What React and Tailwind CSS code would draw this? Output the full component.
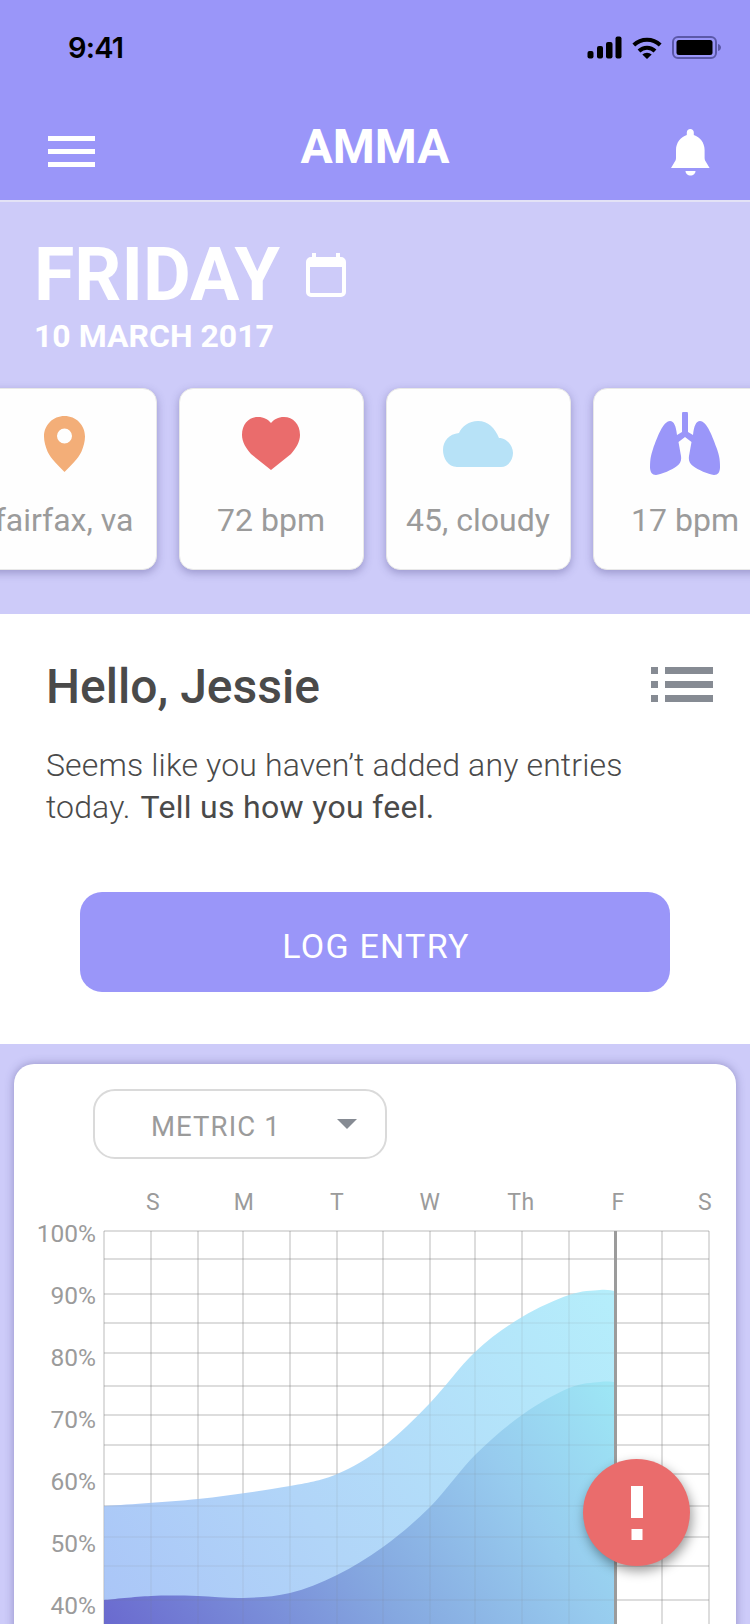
import React from 'react';

const upperPoints = [
  [104, 1506], [198, 1499], [290, 1486], [337, 1474], [383, 1447], [430, 1403], [475, 1352],
  [522, 1317], [569, 1295], [600, 1290], [615, 1291],
];

const lowerPoints = [
  [104, 1600], [151, 1596], [198, 1596], [243, 1598], [290, 1593], [337, 1575], [383, 1547],
  [430, 1507], [475, 1455], [522, 1415], [569, 1388], [600, 1382], [615, 1382],
];

const gridX = [104, 151, 198, 243, 290, 337, 383, 430, 475, 522, 569, 662, 709];
const gridY = [1231, 1259, 1294, 1323, 1353, 1386, 1415, 1445, 1474, 1506, 1537, 1566, 1600];
const yLabels = ['100%', '90%', '80%', '70%', '60%', '50%', '40%'];
const days = ['S', 'M', 'T', 'W', 'Th', 'F', 'S'];

// smooth line through the points, closed along the bottom of the chart
const areaPath = (pts) => {
  let d = `M${pts[0][0]} ${pts[0][1]}`;
  for (let i = 0; i < pts.length - 1; i++) {
    const p0 = pts[i - 1] || pts[i];
    const p1 = pts[i];
    const p2 = pts[i + 1];
    const p3 = pts[i + 2] || p2;
    const c1x = p1[0] + (p2[0] - p0[0]) / 6;
    const c1y = p1[1] + (p2[1] - p0[1]) / 6;
    const c2x = p2[0] - (p3[0] - p1[0]) / 6;
    const c2y = p2[1] - (p3[1] - p1[1]) / 6;
    d += `C${c1x} ${c1y} ${c2x} ${c2y} ${p2[0]} ${p2[1]}`;
  }
  return `${d}L615 1624L104 1624Z`;
};

const StatusIcons = () => (
  <div className="flex items-center">
    <svg width="35" height="23" viewBox="0 0 35 23" fill="#000">
      <rect x="0.5" y="15" width="6" height="7.5" rx="2" />
      <rect x="10" y="10" width="6" height="12.5" rx="2" />
      <rect x="19" y="6" width="6.5" height="16.5" rx="2" />
      <rect x="28.5" y="0.5" width="6" height="22" rx="2" />
    </svg>
    <svg className="ml-[10px]" width="30" height="23" viewBox="0 0 30 23" fill="none" stroke="#000">
      <path d="M1.8 9A19 19 0 0 1 28.2 9" strokeWidth="4" />
      <path d="M7 15A11.5 11.5 0 0 1 23 15" strokeWidth="4" />
      <path d="M10.3 18.6A6.6 6.6 0 0 1 19.7 18.6L15 23Z" fill="#000" stroke="none" />
    </svg>
    <svg className="ml-[10px]" width="49" height="23" viewBox="0 0 49 23" fill="none">
      <rect x="1" y="1" width="43" height="21" rx="5" stroke="#5b58a8" strokeWidth="2" />
      <rect x="4.5" y="4" width="36" height="15" rx="2.5" fill="#000" />
      <path d="M46 8c2 .5 3 2 3 3.5s-1 3-3 3.5z" fill="#5b58a8" />
    </svg>
  </div>
);

const Bell = () => (
  <svg width="39" height="47" viewBox="0 0 39 47" fill="#fff">
    <path d="M19.3 0c-2 0-3.5 1.5-3.5 3.5v2.6C9.5 8 5 14 5 21v8c0 2-1 3.5-2 5L0 39h38.6l-3-5c-1-1.5-2-3-2-5v-8c0-7-4.5-13-10.8-14.9V3.5c0-2-1.5-3.5-3.5-3.5Z" />
    <path d="M14.5 42h10c0 2.5-2.2 4.5-5 4.5s-5-2-5-4.5Z" />
  </svg>
);

const CalendarIcon = () => (
  <svg width="40" height="44" viewBox="0 0 40 44" fill="none">
    <rect x="2" y="6" width="36" height="36" rx="3" stroke="#fff" strokeWidth="4" />
    <rect x="2" y="6" width="36" height="8" fill="#fff" />
    <rect x="6" y="0" width="4" height="7" fill="#fff" />
    <rect x="30" y="0" width="4" height="7" fill="#fff" />
  </svg>
);

const PinIcon = () => (
  <svg width="41" height="56" viewBox="0 0 41 56">
    <path
      fillRule="evenodd"
      fill="#f3ae78"
      d="M20.5 0C9 0 0 9 0 20.5c0 5 1.5 10 3.5 15C7 43 14 49 20.5 56 27 49 34 43 37.5 35.5c2-5 3.500-10 3.500-15C41 9 32 0 20.5 0ZM20.5 12.500a7.500 7.500 0 1 1 0 15 7.500 7.500 0 0 1 0-15Z"
    />
  </svg>
);

const HeartIcon = () => (
  <svg width="58" height="53" viewBox="0 0 58 53" fill="#ea6c6c">
    <path d="M29 6C26 2.500 22 0 16 0 7 0 0 7 0 18c0 7 4 13 9 19l20 16 20-16c5-6 9-12 9-19C58 7 51 0 42 0 36 0 32 2.500 29 6Z" />
  </svg>
);

const CloudIcon = () => (
  <svg width="70" height="46" viewBox="0 0 70 46" fill="#b7e2f7">
    <path d="M14 46C5 46 0 37 0 29 0 20 6 13 16 12 19 5 26 0 35 0 45 0 52 7 56 17 64 17 70 25 70 32 70 39 65 46 58 46Z" />
  </svg>
);

const LungsIcon = () => (
  <svg width="70" height="63" viewBox="0 0 70 63" fill="#9a96f9">
    <path d="M32 2a3 3 0 0 1 6 0V20L43 23C44 14 46 9 50 9 57 9 63 26 67 37 69 43 70 47 70 55 70 60 68 63 64 63 58 62 48 58 43 54 39 51 38.500 48 39 44L41.500 30 35 25 28.500 30 31 44C31.500 48 31 51 27 54 22 58 12 62 6 63 2 63 0 60 0 55 0 47 1 43 3 37 7 26 13 9 20 9 24 9 26 14 27 23L32 20Z" />
  </svg>
);

const stats = [
  { icon: <PinIcon />, label: 'fairfax, va' },
  { icon: <HeartIcon />, label: '72 bpm' },
  { icon: <CloudIcon />, label: '45, cloudy' },
  { icon: <LungsIcon />, label: '17 bpm' },
];

const StatCard = ({ icon, label }) => (
  <div className="flex h-[182px] w-[185px] shrink-0 flex-col items-center rounded-[14px] border border-[#e8e8e8] bg-[#fefefe] shadow-[0_3px_8px_rgba(60,55,120,0.35)]">
    <div className="flex h-[109px] items-center">{icon}</div>
    <div className="text-[32px] leading-[44px] whitespace-nowrap text-[#9b9b9b]">{label}</div>
  </div>
);

const GridLines = ({ opacity }) => (
  <g stroke="#808080" strokeOpacity={opacity} strokeWidth="1.500">
    {gridX.map((x) => (
      <line key={x} x1={x} y1="1231" x2={x} y2="1624" />
    ))}
    {gridY.map((y) => (
      <line key={y} x1="104" y1={y} x2="709" y2={y} />
    ))}
  </g>
);

const Chart = () => (
  <svg className="block shrink-0" width="610" height="394" viewBox="103 1230 610 394" fill="none">
    <defs>
      <linearGradient id="upper" gradientUnits="userSpaceOnUse" x1="104" y1="1624" x2="615" y2="1290">
        <stop offset="0" stopColor="#aac5f7" />
        <stop offset="0.38" stopColor="#b1d5f8" />
        <stop offset="1" stopColor="#b5eefb" />
      </linearGradient>
      <linearGradient id="lower" gradientUnits="userSpaceOnUse" x1="104" y1="1624" x2="615" y2="1290">
        <stop offset="0" stopColor="#6a6acf" />
        <stop offset="0.41" stopColor="#85a8e0" />
        <stop offset="0.68" stopColor="#97cbee" />
        <stop offset="0.91" stopColor="#9de6f5" />
      </linearGradient>
    </defs>
    <GridLines opacity="0.27" />
    <path d={areaPath(upperPoints)} fill="url(#upper)" />
    <path d={areaPath(lowerPoints)} fill="url(#lower)" />
    <GridLines opacity="0.1" />
    <line x1="615.500" y1="1231" x2="615.500" y2="1624" stroke="#9b9b9b" strokeWidth="3" />
  </svg>
);

const App = () => {
  return (
    <div className="relative h-[1624px] w-[750px] overflow-hidden bg-white font-[Roboto,sans-serif]">
      <header className="flex h-[202px] flex-col border-b-2 border-[#e3e2f6] bg-[#9a96f9]">
        <div className="flex h-[94px] items-center justify-between pr-[29px] pl-[68px]">
          <span className="font-[Inter,sans-serif] text-[29px] leading-none font-semibold tracking-[-0.8px] text-black">
            9:41
          </span>
          <StatusIcons />
        </div>
        <div className="grid flex-1 grid-cols-[1fr_auto_1fr] items-center px-[40px]">
          <div className="mt-[8px] ml-[8px] flex w-[47px] flex-col gap-[8px]">
            <div className="h-[5px] bg-white" />
            <div className="h-[5px] bg-white" />
            <div className="h-[5px] bg-white" />
          </div>
          <h1 className="text-[48px] leading-none font-bold text-white">AMMA</h1>
          <div className="mt-[10px] flex justify-end">
            <Bell />
          </div>
        </div>
      </header>

      <section className="h-[412px] overflow-hidden bg-[#cdcbf9] pt-[36px]">
        <div className="flex items-center gap-[26px] pl-[34px]">
          <span className="text-[73.5px] leading-[74px] font-bold text-white">FRIDAY</span>
          <CalendarIcon />
        </div>
        <div className="mt-[5px] pl-[34px] text-[32px] leading-[38px] font-bold text-white">10 MARCH 2017</div>
        <div className="mt-[33px] ml-[-28.5px] flex gap-[22px]">
          {stats.map((s) => (
            <StatCard key={s.label} icon={s.icon} label={s.label} />
          ))}
        </div>
      </section>

      <section className="h-[430px] bg-white pt-[46px]">
        <div className="flex items-start justify-between pr-[37px] pl-[46px]">
          <h2 className="text-[48px] leading-[54px] font-medium text-[#4a4a4a]">Hello, Jessie</h2>
          <svg className="mt-[7px]" width="62" height="35" viewBox="0 0 62 35" fill="#868b93">
            <rect x="0" y="0" width="7" height="7" />
            <rect x="14" y="0" width="48" height="7" />
            <rect x="0" y="14" width="7" height="7" />
            <rect x="14" y="14" width="48" height="7" />
            <rect x="0" y="28" width="7" height="7" />
            <rect x="14" y="28" width="48" height="7" />
          </svg>
        </div>
        <p className="mt-[30px] pl-[46px] text-[32px] leading-[42px] font-light tracking-[0.14px] text-[#4a4a4a]">
          Seems like you haven’t added any entries
          <br />
          today. <span className="ml-[2px] font-normal tracking-[0.3px]">Tell us how you feel.</span>
        </p>
        <button className="mx-auto mt-[64px] flex h-[100px] w-[590px] items-center justify-center rounded-[22px] bg-[#9a96f9] pt-[8px] pl-[2px] text-[34px] font-normal tracking-[1.25px] text-white">
          LOG ENTRY
        </button>
      </section>

      <section className="h-[580px] bg-[#cdcbf9] px-[14px] pt-[20px]">
        <div className="h-[700px] rounded-[20px] bg-white pt-[25px] shadow-[0_0_10px_rgba(60,55,120,0.4)]">
          <div className="ml-[79px] flex h-[70px] w-[294px] items-center rounded-[22px] border-2 border-[#dadada] pr-[28px] pl-[56px]">
            <span className="flex-1 pt-[6px] text-[27.5px] tracking-[1.1px] whitespace-nowrap text-[#9b9b9b]">METRIC 1</span>
            <svg width="20" height="10" viewBox="0 0 20 10" fill="#868b93">
              <path d="M0 0h20L10 10z" />
            </svg>
          </div>
          <div className="mt-[28px] ml-[93px] grid h-[32px] grid-cols-[92px_90px_96px_90px_92px_102px_72px] text-center text-[23px] leading-[32px] tracking-[0.5px] text-[#9b9b9b]">
            {days.map((d, i) => (
              <span key={i}>{d}</span>
            ))}
          </div>
          <div className="mt-[11px] flex">
            <div className="mt-[-27px] h-[433px] w-[82px] shrink-0 text-right text-[24.5px] leading-[62px] text-[#9b9b9b]">
              {yLabels.map((l) => (
                <div key={l}>{l}</div>
              ))}
            </div>
            <div className="ml-[7px]">
              <Chart />
            </div>
          </div>
        </div>
      </section>

      <div className="absolute right-[60px] bottom-[58px] flex h-[107px] w-[107px] items-center justify-center rounded-full bg-[#ea6c6c] shadow-[2px_5px_12px_rgba(0,0,0,0.4)]">
        <svg width="12" height="54" viewBox="0 0 12 54" fill="#fff">
          <rect x="0" y="0" width="12" height="32" />
          <rect x="0.500" y="43" width="11" height="11" />
        </svg>
      </div>
    </div>
  );
};

export default App;
